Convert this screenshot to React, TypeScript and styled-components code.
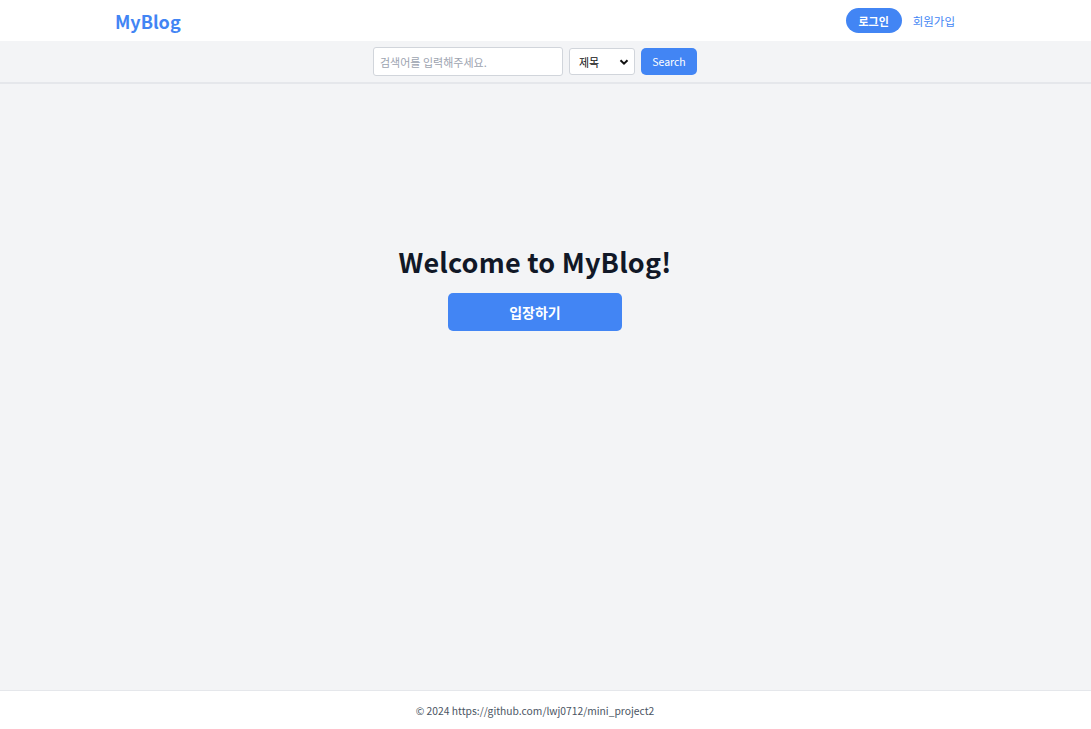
import React from "react";
import styled, { createGlobalStyle } from "styled-components";

const Global = createGlobalStyle`
  html, body { margin: 0; padding: 0; }
  body {
    font-family: "Noto Sans CJK KR", "Noto Sans", sans-serif;
    background: #f3f4f6;
  }
  #root { min-height: 100vh; }
`;

const Page = styled.div`
  display: flex;
  flex-direction: column;
  min-height: 100vh;
`;

const Gutter = styled.div<{ $full?: boolean }>`
  padding-right: 21px;
  height: ${(p) => (p.$full ? "100%" : "auto")};
`;

const Header = styled.header`
  background: #ffffff;
  height: 41px;
`;

const HeaderInner = styled.div`
  max-width: 896px;
  margin: 0 auto;
  height: 100%;
  padding: 0 28px;
  box-sizing: border-box;
  display: flex;
  align-items: center;
  justify-content: space-between;
`;

const Logo = styled.a`
  font-size: 18px;
  font-weight: 700;
  color: #4285f4;
  text-decoration: none;
`;

const Nav = styled.nav`
  display: flex;
  align-items: center;
  gap: 11px;
`;

const PillButton = styled.button`
  background: #4285f4;
  color: #fff;
  border: none;
  border-radius: 999px;
  height: 25px;
  width: 56px;
  padding: 0;
  font-family: inherit;
  font-size: 11px;
  font-weight: 700;
`;

const NavLink = styled.a`
  color: #4285f4;
  font-size: 11.5px;
  text-decoration: none;
`;

const SearchSection = styled.div`
  height: 41px;
  border-bottom: 2px solid #e5e7eb;
`;

const SearchBar = styled.div`
  height: 100%;
  display: flex;
  align-items: center;
  justify-content: center;
  gap: 6px;
`;

const Input = styled.input`
  width: 190px;
  height: 29px;
  box-sizing: border-box;
  border: 1px solid #d1d5db;
  border-radius: 3px;
  padding: 0 6px;
  font-family: inherit;
  font-size: 11px;
  &::placeholder { color: #9ca3af; }
`;

const SelectBox = styled.div`
  width: 66px;
  height: 27px;
  box-sizing: border-box;
  border: 1px solid #d1d5db;
  border-radius: 3px;
  background: #fff;
  display: flex;
  align-items: center;
  justify-content: space-between;
  padding: 0 4px 0 9px;
  font-size: 11px;
  color: #111;
`;

const SearchButton = styled.button`
  width: 56px;
  height: 27px;
  background: #4285f4;
  color: #fff;
  border: none;
  border-radius: 5px;
  font-family: inherit;
  font-size: 10.5px;
`;

const Main = styled.main`
  flex: 1;
  display: flex;
  flex-direction: column;
  align-items: center;
  padding-top: 160px;
`;

const Title = styled.h1`
  margin: 0;
  font-size: 27px;
  font-weight: 700;
  color: #111827;
  letter-spacing: 0.2px;
  line-height: 36px;
`;

const EnterButton = styled.button`
  margin-top: 13px;
  width: 174px;
  height: 38px;
  background: #4285f4;
  color: #fff;
  border: none;
  border-radius: 5px;
  font-family: inherit;
  font-size: 14px;
  font-weight: 700;
`;

const Footer = styled.footer`
  background: #fff;
  border-top: 1px solid #e5e7eb;
  height: 38px;
  display: flex;
  align-items: center;
  justify-content: center;
  font-size: 10.3px;
  color: #4b5563;
`;

export default function App() {
  return (
    <Page>
      <Global />
      <Header>
        <Gutter $full>
          <HeaderInner>
            <Logo href="#">MyBlog</Logo>
            <Nav>
              <PillButton>로그인</PillButton>
              <NavLink href="#">회원가입</NavLink>
            </Nav>
          </HeaderInner>
        </Gutter>
      </Header>
      <SearchSection>
        <Gutter $full>
          <SearchBar>
            <Input placeholder="검색어를 입력해주세요." />
            <SelectBox>
              <span>제목</span>
              <svg width="12" height="12" viewBox="0 0 12 12">
                <path d="M2.5 4.2 L6 7.7 L9.5 4.2" fill="none" stroke="#111" strokeWidth="2" />
              </svg>
            </SelectBox>
            <SearchButton>Search</SearchButton>
          </SearchBar>
        </Gutter>
      </SearchSection>
      <Main>
        <Gutter>
          <Title>Welcome to MyBlog!</Title>
        </Gutter>
        <Gutter>
          <EnterButton>입장하기</EnterButton>
        </Gutter>
      </Main>
      <Footer>
        <Gutter>© 2024 https://github.com/lwj0712/mini_project2</Gutter>
      </Footer>
    </Page>
  );
}
